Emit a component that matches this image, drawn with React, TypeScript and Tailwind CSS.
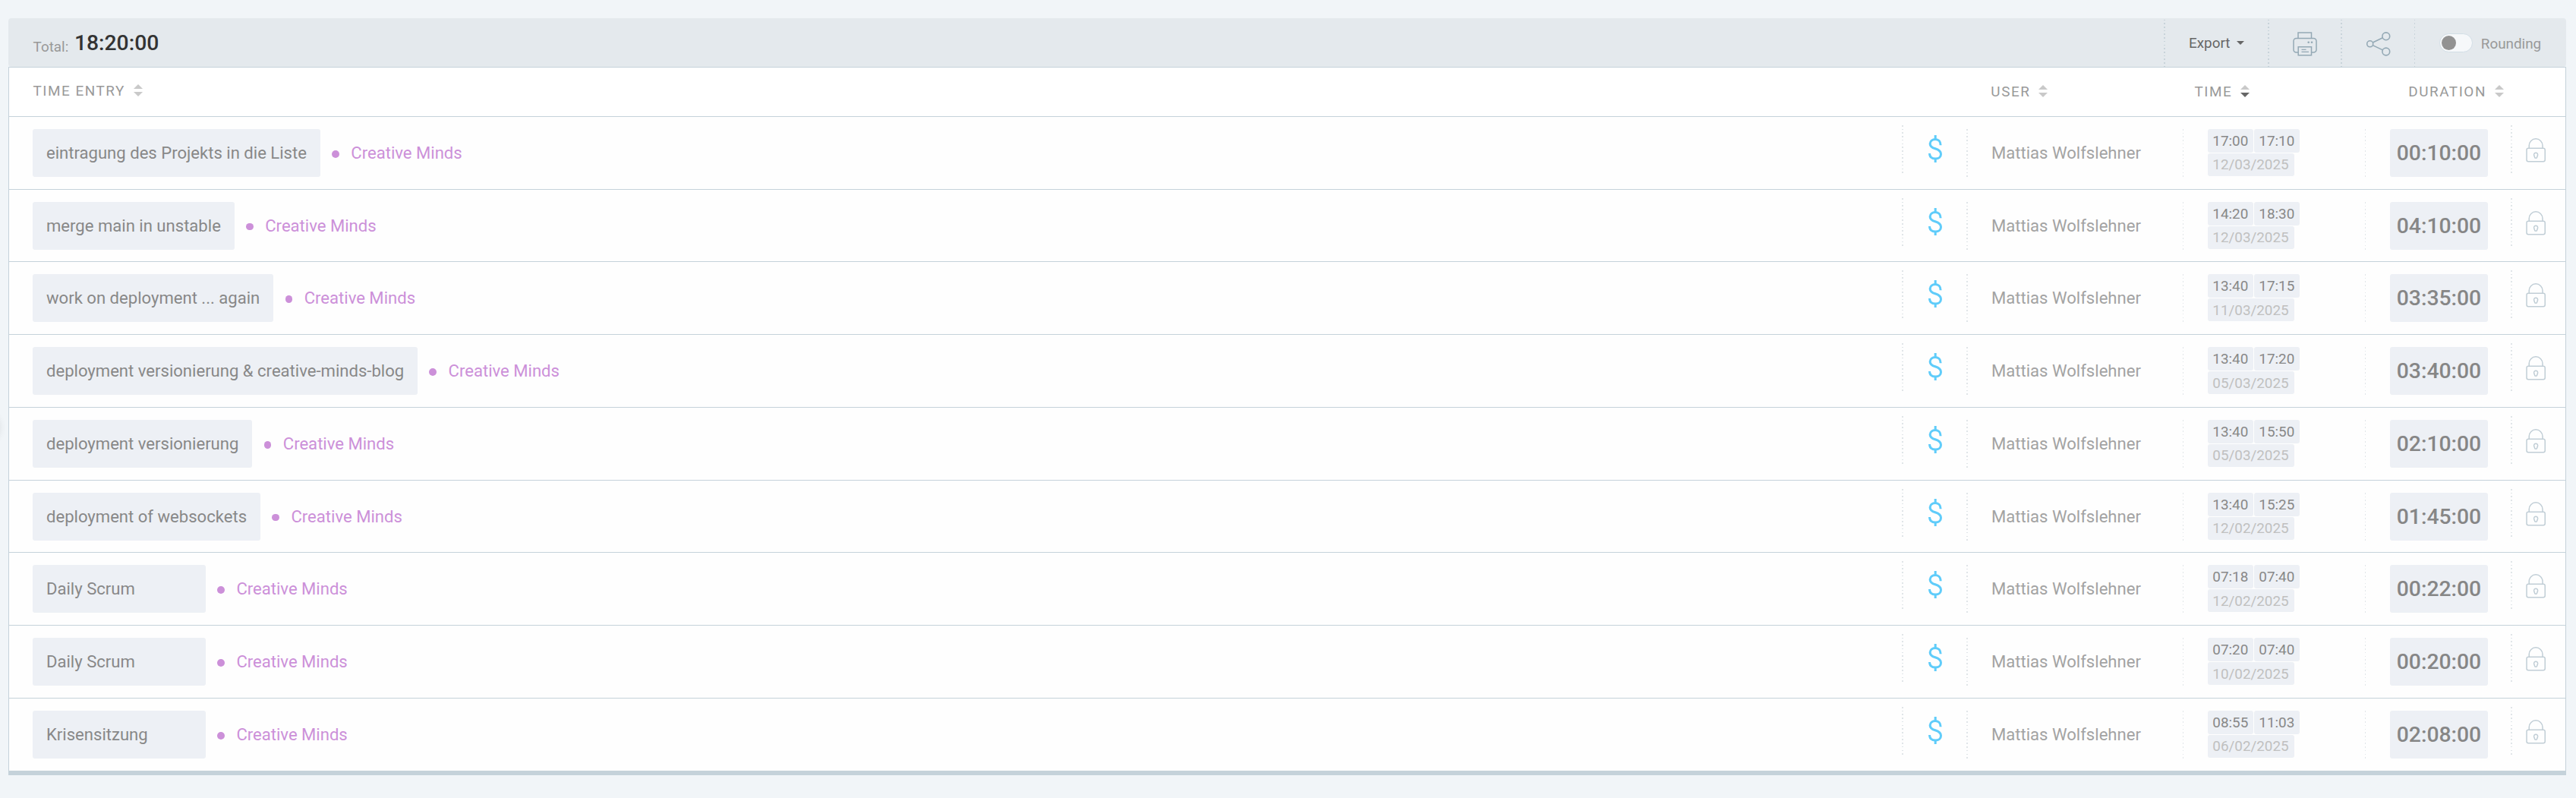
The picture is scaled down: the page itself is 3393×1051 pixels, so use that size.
import type { ReactNode } from "react";

type Entry = {
  title: string;
  start: string;
  end: string;
  date: string;
  duration: string;
};

const entries: Entry[] = [
  { title: "eintragung des Projekts in die Liste", start: "17:00", end: "17:10", date: "12/03/2025", duration: "00:10:00" },
  { title: "merge main in unstable", start: "14:20", end: "18:30", date: "12/03/2025", duration: "04:10:00" },
  { title: "work on deployment ... again", start: "13:40", end: "17:15", date: "11/03/2025", duration: "03:35:00" },
  { title: "deployment versionierung & creative-minds-blog", start: "13:40", end: "17:20", date: "05/03/2025", duration: "03:40:00" },
  { title: "deployment versionierung", start: "13:40", end: "15:50", date: "05/03/2025", duration: "02:10:00" },
  { title: "deployment of websockets", start: "13:40", end: "15:25", date: "12/02/2025", duration: "01:45:00" },
  { title: "Daily Scrum", start: "07:18", end: "07:40", date: "12/02/2025", duration: "00:22:00" },
  { title: "Daily Scrum", start: "07:20", end: "07:40", date: "10/02/2025", duration: "00:20:00" },
  { title: "Krisensitzung", start: "08:55", end: "11:03", date: "06/02/2025", duration: "02:08:00" },
];

function SortIcon({ active = false }: { active?: boolean }) {
  return (
    <svg width="12" height="16" viewBox="0 0 12 16" className="shrink-0">
      <path d="M6 0 L12 6 H0 Z" fill="#c9c9c9" />
      <path d="M0 10 H12 L6 16 Z" fill={active ? "#666666" : "#c9c9c9"} />
    </svg>
  );
}

function PrintIcon() {
  return (
    <svg width="32" height="32" viewBox="0 0 32 32" fill="none" stroke="#94a9b5" strokeWidth="1.5">
      <path d="M7 8.2V1H24.5V8.2" />
      <path d="M7 27H4.5A3.5 3.5 0 0 1 1 23.5V12A3.5 3.5 0 0 1 4.5 8.5H27.5A3.5 3.5 0 0 1 31 12V23.5A3.5 3.5 0 0 1 27.5 27H24.5" />
      <path d="M7.2 19.7H24.5V30.7H7.2Z" />
      <path d="M11.5 23.3H17.5M11.5 26.3H21" strokeWidth="1.3" />
      <circle cx="20.7" cy="13.7" r="1.3" fill="#94a9b5" stroke="none" />
      <circle cx="25" cy="13.7" r="1.3" fill="#94a9b5" stroke="none" />
    </svg>
  );
}

function ShareIcon() {
  return (
    <svg width="32" height="32" viewBox="0 0 32 32" fill="none" stroke="#94a9b5" strokeWidth="1.6">
      <circle cx="4.7" cy="15.8" r="4" />
      <circle cx="25.8" cy="5.8" r="4.9" />
      <circle cx="25.8" cy="26" r="4.9" />
      <path d="M8.3 14 L21.4 7.8M8.3 17.6 L21.4 23.9" />
    </svg>
  );
}

function LockIcon() {
  return (
    <svg width="26" height="32" viewBox="0 0 26 32" fill="none" stroke="#c1ced6" strokeWidth="1.5">
      <path d="M4.2 13.2V9.7A8.9 8.9 0 0 1 22 9.7V13.2" />
      <rect x="1" y="13.2" width="24.2" height="17.6" rx="2.2" />
      <path d="M13.1 19.3C15 19.3 15.8 20.7 15.6 22.1C15.4 23.1 15 23.6 14.8 24.6C14.7 25.8 14.2 26.3 13.1 26.3C12 26.3 11.5 25.8 11.4 24.6C11.2 23.6 10.8 23.1 10.6 22.1C10.4 20.7 11.2 19.3 13.1 19.3Z" />
    </svg>
  );
}

function DollarIcon() {
  return (
    <svg width="18" height="36" viewBox="0 0 18 36" fill="none" stroke="#5fccfa" strokeWidth="3">
      <path d="M9.2 0V5M9.2 31V36" />
      <path d="M16.1 13.2C16.1 8.6 13.3 5.4 9.2 5.4C5.2 5.4 2.2 7.8 2.2 11.4C2.2 15 4.6 16.4 9 17.8C13.8 19.3 16.5 20.8 16.5 24.9C16.5 28.5 13.7 31 9.4 31C4.6 31 1.5 28.6 1.5 24" />
    </svg>
  );
}

function Dots({ className = "" }: { className?: string }) {
  return (
    <div
      className={`shrink-0 bg-[repeating-linear-gradient(to_bottom,#e0e5e8_0px,#e0e5e8_1.57px,transparent_1.57px,transparent_4.71px)] ${className}`}
    />
  );
}

function BarDots({ className = "" }: { className?: string }) {
  return (
    <div
      className={`h-16 shrink-0 bg-[repeating-linear-gradient(to_bottom,transparent_0px,transparent_1.57px,#c8d3da_1.57px,#c8d3da_3.14px,transparent_3.14px,transparent_4.71px)] ${className}`}
    />
  );
}

function Chip({ children, className = "" }: { children: ReactNode; className?: string }) {
  return (
    <div className={`flex shrink-0 items-center whitespace-nowrap rounded-[3px] bg-[#edf0f5] ${className}`}>{children}</div>
  );
}

function Toolbar() {
  return (
    <div className="flex h-16 items-start rounded-[4px] bg-[#e4e9ed] pl-[32.6px]">
      <div className="flex flex-1 items-start">
        <span className="mt-[27px] text-[18.86px] leading-[22px] text-[#999]">Total:</span>
        <span className="ml-[7.6px] mt-[16px] text-[28.3px] font-medium leading-[34px] text-[#333]">18:20:00</span>
      </div>
      <BarDots className="w-[2px]" />
      <div className="flex h-16 w-[135px] items-center pl-[31px] pt-px">
        <span className="text-[18.86px] leading-[22px] text-[#666]">Export</span>
        <svg width="10" height="5" viewBox="0 0 10 5" className="ml-[8.5px]">
          <path d="M0 0H10L5 5Z" fill="#666" />
        </svg>
      </div>
      <BarDots className="w-[2px]" />
      <div className="flex h-16 w-[94px] justify-start pl-[31px] pt-[17.5px]">
        <PrintIcon />
      </div>
      <BarDots className="w-[2px]" />
      <div className="flex h-16 w-[95px] justify-start pl-[31.5px] pt-[17.5px]">
        <ShareIcon />
      </div>
      <BarDots className="w-px" />
      <div className="flex h-16 w-[199px] items-start pl-[32.3px]">
        <div className="mt-5 flex h-[24.5px] w-[43.5px] items-center rounded-full border border-[#d2dee6] bg-[#f6f8fa] pl-[1.4px]">
          <div className="size-[19.5px] rounded-full bg-[#929292]" />
        </div>
        <span className="ml-[11px] mt-[22.5px] text-[18.86px] leading-[22px] text-[#999]">Rounding</span>
      </div>
    </div>
  );
}

function HeaderCell({ label, active, className = "" }: { label: string; active?: boolean; className?: string }) {
  return (
    <div className={`flex shrink-0 items-center ${className}`}>
      <span className="text-[18.86px] leading-[22px] tracking-[1.57px] text-[#999]">{label}</span>
      <div className="mb-[2.5px] ml-[11px]">
        <SortIcon active={active} />
      </div>
    </div>
  );
}

function TableHead() {
  return (
    <div className="flex h-[64.75px] items-start border-b border-[#c5d2da] pl-[31.4px]">
      <HeaderCell label="TIME ENTRY" className="h-[62px] flex-1" />
      <HeaderCell label="USER" className="h-16 w-[268.2px]" />
      <HeaderCell label="TIME" active className="h-16 w-[281.7px]" />
      <HeaderCell label="DURATION" className="h-16 w-[206.8px]" />
    </div>
  );
}

function Row({ entry, last }: { entry: Entry; last: boolean }) {
  return (
    <div
      className={`flex items-start bg-[#fefefe] pl-[31px] ${last ? "h-[95px]" : "h-[95.75px] border-b border-[#c5d2da]"}`}
    >
      <div className="flex flex-1 items-start pt-4">
        <Chip className="h-[63px] min-w-[228px] px-[18px] pt-px text-[22.08px] leading-[26px] text-[#888]">{entry.title}</Chip>
        <div className="flex h-[63px] items-center">
          <span className="ml-[15.3px] mt-[3px] size-[9.6px] rounded-full bg-[#cc90d9]" />
          <span className="ml-[15.5px] mt-px text-[22.08px] leading-[26px] text-[#cc90d9]">Creative Minds</span>
        </div>
      </div>

      <Dots className="mt-[11px] h-[63px] w-[2px]" />
      <div className="flex w-[83px] shrink-0 pl-[33px] pt-6">
        <DollarIcon />
      </div>
      <Dots className="mt-4 h-[63px] w-[2px]" />
      <div className="mt-4 flex h-[63px] w-[283px] shrink-0 items-center pl-[31px] pt-px text-[22.08px] leading-[26px] text-[#a3a3a3]">
        Mattias Wolfslehner
      </div>
      <Dots className="mt-4 h-[63px] w-px" />
      <div className="flex w-[239px] shrink-0 flex-col gap-px pl-8 pt-4 text-[18.86px] leading-[22px]">
        <div className="flex gap-px text-[#888]">
          <Chip className="h-[31px] w-[60px] pl-[6.3px] pt-px">{entry.start}</Chip>
          <Chip className="h-[31px] w-[60px] pl-[6.3px] pt-px">{entry.end}</Chip>
        </div>
        <Chip className="h-[30px] w-[114px] pl-[6.3px] pt-px text-[#c0c0c0]">{entry.date}</Chip>
      </div>
      <Dots className="mt-4 h-[63px] w-px" />
      <div className="w-[191px] shrink-0 pl-8 pt-4">
        <Chip className="h-[63px] w-[129px] justify-center pt-px text-[28.3px] font-medium leading-[34px] text-[#868686]">
          {entry.duration}
        </Chip>
      </div>
      <Dots className="mt-[11px] h-[63px] w-[2px]" />
      <div className="w-[70px] shrink-0 pl-[18.2px] pt-[28px]">
        <LockIcon />
      </div>
    </div>
  );
}

export default function App() {
  return (
    <div className="relative h-[1051px] w-[3393px] overflow-hidden bg-[#f1f5f8] pl-[11px] pt-6 font-[Roboto,sans-serif]">
      {/* shadow of the collapsed side panel's round handle */}
      <div className="absolute -left-[40px] top-[543px] size-[40px] rounded-full shadow-[0_0_10px_rgba(0,0,0,0.09)]" />
      <div className="relative w-[3369px]">
        <Toolbar />
        <div className="h-[933px] border-x border-b-[6px] border-t border-[#c5d2da] bg-white">
          <TableHead />
          {entries.map((entry, i) => (
            <Row key={i} entry={entry} last={i === entries.length - 1} />
          ))}
        </div>
      </div>
    </div>
  );
}
